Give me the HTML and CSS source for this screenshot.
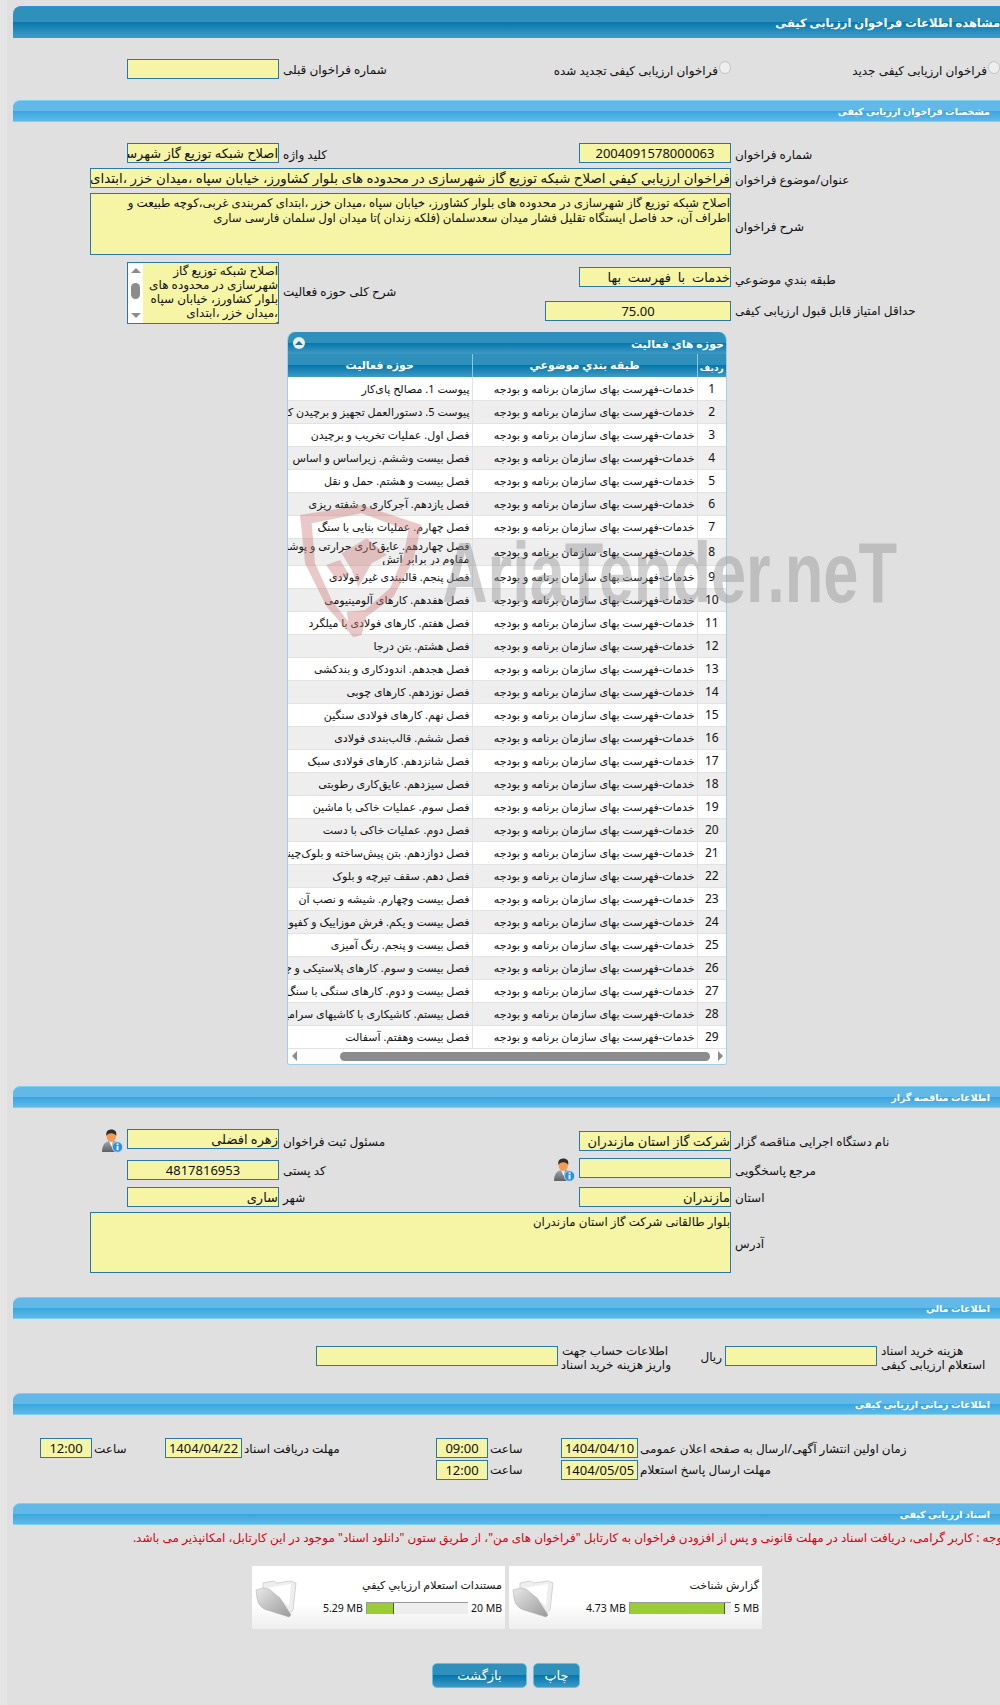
FILE: index.html
```html
<!DOCTYPE html>
<html lang="fa">
<head>
<meta charset="utf-8">
<title>مشاهده اطلاعات فراخوان ارزیابی کیفی</title>
<link rel="stylesheet" href="styles.css">
</head>
<body>
<div class="page" dir="rtl">
  <h1 class="head-bar">مشاهده اطلاعات فراخوان ارزیابی کیفی</h1>

  <div class="form top-form">
    <label class="radio-cell"><input type="radio" class="radio" disabled>فراخوان ارزیابی کیفی جدید</label>
    <label class="radio-cell"><input type="radio" class="radio" disabled>فراخوان ارزیابی کیفی تجدید شده</label>
    <span class="lbl">شماره فراخوان قبلی</span>
    <input class="fld w152" readonly value="">
  </div>

  <h2 class="sec-bar">مشخصات فراخوان ارزیابی کیفی</h2>
  <div class="form spec-form">
    <span class="lbl">شماره فراخوان</span>
    <input class="fld w152 ctr" readonly value="2004091578000063">
    <span class="lbl">کلید واژه</span>
    <input class="fld w152" readonly value="اصلاح شبکه توزیع گاز شهرسازی در محدوده های بلوار">

    <span class="lbl">عنوان/موضوع فراخوان</span>
    <input class="fld w641 span3 title-fld" readonly value="فراخوان ارزيابي کيفي اصلاح شبکه توزیع گاز شهرسازی در محدوده های بلوار کشاورز، خیابان سپاه ،میدان خزر ،ابتدای کمربندی غربی">

    <span class="lbl">شرح فراخوان</span>
    <textarea class="fld w641 h62 span3" readonly>اصلاح شبکه توزیع گاز شهرسازی در محدوده های بلوار کشاورز، خیابان سپاه ،میدان خزر ،ابتدای کمربندی غربی،کوچه طبیعت و اطراف آن، حد فاصل ایستگاه تقلیل فشار میدان سعدسلمان (فلکه زندان )تا میدان اول سلمان فارسی ساری</textarea>

    <span class="lbl low">طبقه بندي موضوعي</span>
    <input class="fld w152 low-fld" readonly value="خدمات  با  فهرست  بها">
    <span class="lbl span-rows">شرح کلی حوزه فعالیت</span>
    <div class="listbox span-rows">
      <div class="list-text">اصلاح شبکه توزیع گاز شهرسازی در محدوده های بلوار کشاورز، خیابان سپاه ،میدان خزر ،ابتدای کمربندی غربی</div>
      <div class="list-scroll"><i class="tri-up"></i><b class="list-thumb"></b><i class="tri-down"></i></div>
    </div>

    <span class="lbl score-lbl">حداقل امتیاز قابل قبول ارزیابی کیفی</span>
    <input class="fld w186 ctr score" readonly value="75.00">
  </div>

  <div class="tbl-wrap">
    <div class="tbl-title">
      <span>حوزه های فعالیت</span>
      <span class="collapse"><i></i></span>
    </div>
    <table class="tbl">
      <colgroup><col class="c1"><col class="c2"><col class="c3"></colgroup>
      <thead><tr><th class="th-num">رديف</th><th>طبقه بندي موضوعي</th><th>حوزه فعالیت</th></tr></thead>
      <tbody id="rows"></tbody>
    </table>
    <div class="h-scroll"><i class="tri-left"></i><b class="h-thumb"></b><i class="tri-right"></i></div>
  </div>

  <h2 class="sec-bar sec-org">اطلاعات مناقصه گزار</h2>
  <div class="form org-form">
    <span class="lbl">نام دستگاه اجرایی مناقصه گزار</span>
    <input class="fld w152 nudge2" readonly value="شرکت گاز استان مازندران">
    <span class="lbl">مسئول ثبت فراخوان</span>
    <div class="with-icon">
      <input class="fld w152" readonly value="زهره افضلی">
      <svg class="person" viewBox="0 0 22 24"><use href="#person"></use></svg>
    </div>

    <span class="lbl">مرجع پاسخگویی</span>
    <div class="with-icon">
      <input class="fld w152" readonly value="">
      <svg class="person" viewBox="0 0 22 24"><use href="#person"></use></svg>
    </div>
    <span class="lbl">کد پستی</span>
    <input class="fld w152 ctr nudge2" readonly value="4817816953">

    <span class="lbl">استان</span>
    <input class="fld w152" readonly value="مازندران">
    <span class="lbl">شهر</span>
    <input class="fld w152" readonly value="ساری">

    <span class="lbl addr-lbl">آدرس</span>
    <textarea class="fld w641 h61 span3" readonly>بلوار طالقانی شرکت گاز استان مازندران</textarea>
  </div>

  <h2 class="sec-bar sec-money">اطلاعات مالي</h2>
  <div class="money">
    <span class="lbl two">هزینه خرید اسناد<br>استعلام ارزیابی کیفی</span>
    <input class="fld w152" readonly value="">
    <span class="rial">ریال</span>
    <span class="lbl two">اطلاعات حساب جهت<br>واریز هزینه خرید اسناد</span>
    <input class="fld w242" readonly value="">
  </div>

  <h2 class="sec-bar sec-time">اطلاعات زمانی ارزیابی کیفی</h2>
  <div class="times">
    <span class="lbl">زمان اولین انتشار آگهی/ارسال به صفحه اعلان عمومی</span>
    <input class="fld ctr" readonly value="1404/04/10">
    <span class="lbl">ساعت</span>
    <input class="fld ctr" readonly value="09:00">
    <span class="lbl">مهلت دریافت اسناد</span>
    <input class="fld ctr" readonly value="1404/04/22">
    <span class="lbl">ساعت</span>
    <input class="fld ctr" readonly value="12:00">

    <span class="lbl">مهلت ارسال پاسخ استعلام</span>
    <input class="fld ctr" readonly value="1404/05/05">
    <span class="lbl">ساعت</span>
    <input class="fld ctr" readonly value="12:00">
  </div>

  <h2 class="sec-bar sec-docs">اسناد ارزیابی کیفی</h2>
  <p class="note">توجه : کاربر گرامی، دریافت اسناد در مهلت قانونی و پس از افزودن فراخوان به کارتابل "فراخوان های من"، از طریق ستون "دانلود اسناد" موجود در این کارتابل، امکانپذیر می باشد.</p>

  <div class="cards">
    <div class="card">
      <svg class="folder" viewBox="0 0 42 38"><use href="#folder"></use></svg>
      <div class="card-body">
        <div class="card-title">گزارش شناخت</div>
        <div class="meter-row" dir="ltr">
          <span>4.73 MB</span>
          <span class="meter"><span class="meter-fill" style="width:94.6%"></span></span>
          <span>5 MB</span>
        </div>
      </div>
    </div>
    <div class="card">
      <svg class="folder" viewBox="0 0 42 38"><use href="#folder"></use></svg>
      <div class="card-body">
        <div class="card-title">مستندات استعلام ارزيابي کيفي</div>
        <div class="meter-row" dir="ltr">
          <span>5.29 MB</span>
          <span class="meter"><span class="meter-fill" style="width:26.5%"></span></span>
          <span>20 MB</span>
        </div>
      </div>
    </div>
  </div>

  <div class="actions">
    <button class="btn btn-print" type="button">چاپ</button>
    <button class="btn btn-back" type="button">بازگشت</button>
  </div>

  <svg class="watermark" viewBox="0 0 620 150" aria-hidden="true">
    <g transform="scale(.33333)" class="wm-shield">
      <path fill-rule="evenodd" d="M30 45 L215 15 L395 75 L370 180 L310 290 L228 352 L215 405 L190 412 L110 320 L45 190 Z M65 70 L75 190 L125 300 L175 365 L170 335 L225 330 L300 265 L340 170 L355 92 L215 40 Z"/>
      <path d="M108 195 L150 180 L178 225 L140 240 Z"/>
      <path d="M155 160 L230 115 L290 165 L245 190 L205 262 L185 210 Z"/>
    </g>
    <text class="wm-text" x="152" y="102" textLength="455" lengthAdjust="spacingAndGlyphs">AriaTender.neT</text>
  </svg>
</div>

<svg class="defs" width="0" height="0" aria-hidden="true">
  <defs>
    <linearGradient id="suit" x1="0" y1="0" x2="0" y2="1"><stop offset="0" stop-color="#a4a8ac"/><stop offset="1" stop-color="#5d6166"/></linearGradient>
    <linearGradient id="fold" x1="0" y1="0" x2="1" y2="1"><stop offset="0" stop-color="#e8e8e8"/><stop offset="1" stop-color="#999"/></linearGradient>
    <g id="person">
      <path d="M1 23 C1 16 4 13 8 12 L14 12 C18 13 19 16 19 23 Z" fill="url(#suit)"/>
      <path d="M8 12 L12 12 L10.5 18 Z" fill="#f4f4f4"/>
      <ellipse cx="10.3" cy="7.5" rx="4.6" ry="5.4" fill="#f59a4e"/>
      <path d="M5.4 7 C4.6 2.5 7 0.5 10.4 0.5 C14 0.5 16 2.6 15.2 7 C14 4.8 12 4 10.2 4.2 C8 4.4 6.4 5 5.4 7 Z" fill="#2e2e2e"/>
      <circle cx="16.5" cy="18" r="5.2" fill="#2f8fdc" stroke="#cfe6f8" stroke-width=".8"/>
      <rect x="15.6" y="16.8" width="1.9" height="4.4" fill="#fff"/>
      <rect x="15.6" y="14.4" width="1.9" height="1.6" fill="#fff"/>
    </g>
    <g id="folder">
      <path d="M8 9 L8 3 L18 1 L22 3 L36 1 L41 3 L38 30 L33 34 Z" fill="#eee" stroke="#c4c4c4" stroke-width=".7"/>
      <path d="M11 8 L36 4 L34 26 Z" fill="#fff"/>
      <path d="M1 10 L8 8 L14 9 L25 18 L36 35 L34 37 L12 30 C6 28 3 24 2 18 Z" fill="url(#fold)" stroke="#aaa" stroke-width=".5"/>
    </g>
  </defs>
</svg>
<script src="rows.js"></script>
</body>
</html>
```
FILE: rows.js
```js
var items = [
  "پیوست 1. مصالح پای‌کار",
  "پیوست 5. دستورالعمل تجهیز و برچیدن کارگاه",
  "فصل اول. عملیات تخریب و برچیدن",
  "فصل بیست وششم. زیراساس و اساس",
  "فصل بیست و هشتم. حمل و نقل",
  "فصل یازدهم. آجرکاری و شفته ریزی",
  "فصل چهارم. عملیات بنایی با سنگ",
  "فصل چهاردهم. عایق‌کاری حرارتی و پوشش‌های<br>مقاوم در برابر آتش",
  "فصل پنجم. قالببندی غیر فولادی",
  "فصل هفدهم. کارهای آلومینیومی",
  "فصل هفتم. کارهای فولادی با میلگرد",
  "فصل هشتم. بتن درجا",
  "فصل هجدهم. اندودکاری و بندکشی",
  "فصل نوزدهم. کارهای چوبی",
  "فصل نهم. کارهای فولادی سنگین",
  "فصل ششم. قالب‌بندی فولادی",
  "فصل شانزدهم. کارهای فولادی سبک",
  "فصل سیزدهم. عایق‌کاری رطوبتی",
  "فصل سوم. عملیات خاکی با ماشین",
  "فصل دوم. عملیات خاکی با دست",
  "فصل دوازدهم. بتن پیش‌ساخته و بلوک‌چینی",
  "فصل دهم. سقف تیرچه و بلوک",
  "فصل بیست وچهارم. شیشه و نصب آن",
  "فصل بیست و یکم. فرش موزاییک و کفپوش",
  "فصل بیست و پنجم. رنگ آمیزی",
  "فصل بیست و سوم. کارهای پلاستیکی و چوبی",
  "فصل بیست و دوم. کارهای سنگی با سنگ",
  "فصل بیستم. کاشیکاری با کاشیهای سرامیکی",
  "فصل بیست وهفتم. آسفالت"
];
var html = "";
for (var i = 0; i < items.length; i++) {
  html += "<tr><td class=\"num\">" + (i + 1) + "</td><td>خدمات-فهرست بهای سازمان برنامه و بودجه</td><td class=\"act\">" + items[i] + "</td></tr>";
}
document.getElementById("rows").innerHTML = html;
```
FILE: styles.css
```css
* { box-sizing: border-box; }
html, body { margin: 0; padding: 0; overflow-x: hidden; }
body {
  background: linear-gradient(90deg, #e5e5e5 7px, #e0e0e0 7px);
  font-family: "Noto Sans", "DejaVu Sans", sans-serif;
  font-size: 11px;
  color: #111;
}
.page {
  position: relative;
  width: 987px;
  height: 1705px;
  margin-left: 13px;
  padding-top: 6px;
  overflow: hidden;
}
.defs { position: absolute; }

.head-bar, .sec-bar { margin: 0; color: #fff; font-weight: bold; }
.head-bar {
  height: 32px;
  line-height: 31px;
  font-size: 11.5px;
  border-top: 1px solid #2f8fdc;
  border-radius: 8px 0 0 0;
  border-bottom: 1px solid #3a95e0;
  background: linear-gradient(#2f90bc 0, #2f90bc 50%, #0577ad 50%, #3f9ac4 100%);
}
.sec-bar {
  height: 22px;
  line-height: 21px;
  font-size: 9.5px;
  padding-right: 10px;
  border-top: 1px solid #7cd0f0;
  border-radius: 7px 0 0 0;
  border-bottom: 1px solid #7cd0f0;
  background: linear-gradient(#62b9e8 0, #62b9e8 50%, #39a5e0 50%, #5fb9e8 100%);
}
.sec-org { margin-top: 21px; }
.sec-money { margin-top: 24px; }
.sec-time { margin-top: 27px; }
.sec-docs { margin-top: 23px; }

.fld {
  display: block;
  margin: 0;
  padding: 0;
  height: 20px;
  border: 1px solid #2a78a8;
  background: #f6f5a5;
  color: #111;
  border-radius: 0;
  outline: none;
  font-family: "Noto Sans", "DejaVu Sans", sans-serif;
  font-size: 13px;
  text-align: right;
}
.title-fld { font-size: 13.4px; }
textarea.fld { resize: none; overflow: hidden; font-size: 11.8px; line-height: 15px; padding-top: 1px; }
.ctr { text-align: center; }
.w152 { width: 152px; }
.w186 { width: 186px; }
.w242 { width: 242px; }
.w641 { width: 641px; }
.h62 { height: 62px; }
.h61 { height: 61px; }

.lbl { font-size: 12px; text-align: left; align-self: center; white-space: nowrap; padding-left: 4px; }
.form .lbl { padding-bottom: 3px; }
.two { line-height: 14px; white-space: nowrap; }

.form {
  display: grid;
  grid-template-columns: 269px 331px 121px 152px;
  align-items: start;
}
.span3 { grid-column: 2 / span 3; }
.span-rows { grid-row: span 2; }

.top-form { margin-top: 21px; height: 41px; grid-template-rows: 20px; }
.top-form .lbl { padding-bottom: 0; }
.radio-cell { display: flex; align-items: center; font-size: 12px; white-space: nowrap; padding-top: 3px; }
.radio {
  appearance: none;
  width: 12px;
  height: 13px;
  margin: -6px 0 0 1px;
  flex: none;
  border: 1px solid #c4c4c4;
  border-radius: 50%;
  background: #eee;
}

.spec-form {
  margin-top: 21px;
  grid-template-rows: 25px 25px 69px 34px 28px;
}
.low-fld { margin-top: 5px; }
.low { margin-top: 4px; }
.score { margin-top: 5px; }
.score-lbl { margin-top: 4px; }
.addr-lbl { margin-top: 3px; }
.form .addr-lbl { padding-bottom: 0; }

.listbox {
  display: flex;
  width: 152px;
  height: 62px;
  margin: 0;
  border: 1px solid #2a78a8;
  background: #f6f5a5;
  overflow: hidden;
}
.list-text { flex: 1; min-width: 0; font-size: 12px; line-height: 14px; padding-top: 1px; overflow: hidden; }
.list-scroll {
  flex: none;
  width: 15px;
  background: #fff;
  display: flex;
  flex-direction: column;
  align-items: center;
  padding: 5px 0;
  justify-content: space-between;
}
.list-thumb { width: 9px; height: 16px; border-radius: 5px; background: #8c8c8c; margin-bottom: 4px; }
.tri-up, .tri-down, .tri-left, .tri-right { display: block; width: 0; height: 0; flex: none; }
.tri-up { border: 5px solid transparent; border-top: 0; border-bottom: 5px solid #8c8c8c; }
.tri-down { border: 5px solid transparent; border-bottom: 0; border-top: 5px solid #8c8c8c; }
.tri-left { border: 5px solid transparent; border-left: 0; border-right: 5px solid #8c8c8c; }
.tri-right { border: 5px solid transparent; border-right: 0; border-left: 5px solid #8c8c8c; }

.tbl-wrap {
  width: 440px;
  margin: 8px 273px 0 0;
  background: #fff;
  border-radius: 8px 8px 3px 3px;
  overflow: hidden;
  border-left: 1px solid #9fcdea;
  border-right: 1px solid #9fcdea;
  border-bottom: 1px solid #9fcdea;
}
.tbl-title {
  height: 22px;
  display: flex;
  align-items: center;
  justify-content: space-between;
  padding: 0 2px 0 5px;
  color: #fff;
  font-weight: bold;
  font-size: 11px;
  background: linear-gradient(#2f90bc 0, #2f90bc 50%, #0577ad 50%, #3f9ac4 100%);
}
.collapse {
  width: 12px;
  height: 12px;
  border-radius: 50%;
  background: #e4eef3;
  display: flex;
  align-items: center;
  justify-content: center;
}
.collapse i { display: block; width: 0; height: 0; border: 4px solid transparent; border-top: 0; border-bottom: 4px solid #2b6a8e; margin-top: -1px; }

.tbl { width: 438px; border-collapse: collapse; table-layout: fixed; }
.c1 { width: 29px; }
.c2 { width: 225px; }
.c3 { width: 184px; }
.tbl th {
  height: 23px;
  padding: 0 2px 3px;
  color: #fff;
  font-size: 11px;
  font-weight: bold;
  border-left: 1px solid #8cc6e2;
  background: linear-gradient(#2f90bc 0, #2f90bc 50%, #0577ad 50%, #3f9ac4 100%);
  white-space: nowrap;
  overflow: hidden;
}
.tbl th:last-child { border-left: 0; }
.tbl .th-num { padding: 3px 0 0; font-size: 9px; }
.tbl td {
  height: 23px;
  padding: 0 2px;
  font-size: 11px;
  line-height: 13px;
  border-left: 1px solid #e2e2e2;
  border-bottom: 1px solid #e2e2e2;
  white-space: nowrap;
  overflow: hidden;
}
.tbl td:last-child { border-left: 0; }
.tbl tbody tr:nth-child(even) td { background: #eee; }
.tbl .num { text-align: center; font-size: 12px; }

.h-scroll {
  height: 15px;
  background: #fdfdfd;
  display: flex;
  align-items: center;
  justify-content: space-between;
  padding: 0 3px 0 4px;
  direction: ltr;
}
.h-thumb { width: 370px; height: 9px; border-radius: 5px; background: #8c8c8c; margin-left: 38px; margin-right: 4px; }

.org-form {
  margin-top: 21px;
  grid-template-rows: 29px 29px 25px 61px;
}
.nudge2 { margin-top: 2px; }
.with-icon { display: flex; align-items: flex-start; }
.person { width: 22px; height: 24px; margin: 0 4px 0 0; flex: none; }

.money {
  display: grid;
  grid-template-columns: 123px 152px 54px 113px 242px;
  grid-template-rows: 20px;
  margin-top: 27px;
  align-items: start;
}
.money .lbl { align-self: start; margin-top: -2px; }
.rial { font-size: 12px; margin-right: 3px; align-self: center; padding-top: 2px; }

.times {
  display: grid;
  grid-template-columns: 362px 77px 73px 52px 194px 77px 73px 52px;
  grid-template-rows: 22px 20px;
  margin-top: 23px;
  align-items: start;
}
.times .lbl { padding-left: 2px; }

.note {
  margin: 5px -6px 0 0;
  color: #d90012;
  font-size: 12px;
  white-space: nowrap;
  line-height: 16px;
}

.cards { display: flex; gap: 4px; margin: 20px 238px 0 0; }
.card {
  display: flex;
  flex-direction: row-reverse;
  width: 253px;
  height: 63px;
  background: linear-gradient(#fff 0, #fff 60%, #eee 100%);
}
.card-body { flex: 1; padding: 11px 3px 0 4px; }
.card-title { font-size: 11px; height: 25px; color: #111; }
.meter-row { display: flex; align-items: center; gap: 3px; justify-content: flex-end; font-size: 10.5px; line-height: 12px; }
.meter {
  display: block;
  width: 102px;
  height: 12px;
  background: #eee;
  border-top: 1px solid #999;
  border-left: 1px solid #999;
}
.meter-fill { display: block; height: 100%; background: #9acd32; border-right: 1px solid #4c5a24; }
.folder { width: 42px; height: 38px; margin: 14px 0 0 3px; flex: none; }

.actions { display: flex; gap: 6px; margin: 34px 420px 0 0; }
.btn {
  height: 25px;
  padding: 0;
  color: #fff;
  font-family: "Noto Sans", "DejaVu Sans", sans-serif;
  font-size: 13px;
  border: 1px solid #5cc0ea;
  border-radius: 5px;
  background: linear-gradient(#2f90bc 0, #2f90bc 50%, #0577ad 50%, #3f9ac4 100%);
}
.btn-print { width: 47px; }
.btn-back { width: 95px; }

.watermark {
  position: absolute;
  left: 277px;
  top: 500px;
  width: 620px;
  height: 150px;
  pointer-events: none;
  direction: ltr;
}
.wm-shield { fill: #d07c7c; fill-opacity: .42; }
.wm-text {
  font-family: "Liberation Sans Narrow", "Liberation Sans", sans-serif;
  font-size: 86px;
  font-weight: bold;
  fill: #909090;
  fill-opacity: .42;
}
```
